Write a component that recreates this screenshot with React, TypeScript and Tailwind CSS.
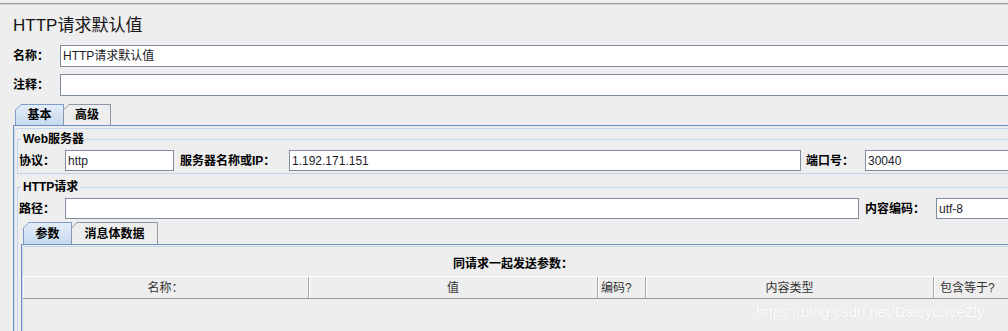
import React from "react";

function Label({ className = "", children }: { className?: string; children: React.ReactNode }) {
  return <div className={`shrink-0 font-bold leading-[16px] whitespace-nowrap ${className}`}>{children}</div>;
}

function Box({ className = "", children }: { className?: string; children?: React.ReactNode }) {
  return (
    <div
      className={`h-full shrink-0 bg-white border border-[#7f8d9c] pl-[2px] flex items-center text-[#1c1c2c] leading-[16px] whitespace-nowrap ${className}`}
    >
      {children}
    </div>
  );
}

function HCell({ className = "", children }: { className?: string; children: React.ReactNode }) {
  return (
    <div
      className={`h-full shrink-0 flex items-center border-r border-[#a8a8a8] shadow-[inset_1px_0_0_#ffffff] text-[#333333] leading-[16px] whitespace-nowrap ${className}`}
    >
      {children}
    </div>
  );
}

function Tab({ selected, className = "", children }: { selected?: boolean; className?: string; children: React.ReactNode }) {
  return (
    <div
      className={`h-full pt-px px-px [clip-path:polygon(0_6px,6px_0,100%_0,100%_100%,0_100%)] ${
        selected ? "bg-[#7e9cc6]" : "bg-[#8d97a6]"
      } ${className}`}
    >
      <div
        className={`h-full flex items-center justify-center font-bold leading-[16px] whitespace-nowrap [clip-path:polygon(0_5px,5px_0,100%_0,100%_100%,0_100%)] ${
          selected ? "bg-gradient-to-b from-[#e4edf8] to-[#c6d9ef]" : "bg-[#eeeeee]"
        }`}
      >
        {children}
      </div>
    </div>
  );
}

export default function App() {
  return (
    <div className="relative w-[1008px] h-[331px] overflow-hidden bg-[#eeeeee] text-[12px] text-black font-['Liberation_Sans','Noto_Sans_CJK_SC',sans-serif]">
      <div className="w-[1040px]">
        <div className="h-[3px]" />
        <div className="h-px bg-[#9aa0a8]" />
        <div className="h-px bg-[#d4d4d4]" />
        {/* title */}
        <div className="h-[40px] pl-[13px] pt-[11px] text-[17px] leading-[20px] text-[#161616]">HTTP请求默认值</div>
        {/* name */}
        <div className="flex h-[22px] items-center">
          <Label className="w-[60px] pl-[13px]">名称：</Label>
          <Box className="flex-1">HTTP请求默认值</Box>
        </div>
        {/* comment */}
        <div className="mt-[7px] flex h-[22px] items-center">
          <Label className="w-[60px] pl-[13px]">注释：</Label>
          <Box className="flex-1" />
        </div>
        {/* tabs */}
        <div className="mt-[8px] ml-[15px] flex h-[21px] items-end">
          <Tab selected className="w-[49px]">基本</Tab>
          <Tab className="-ml-px w-[48px]">高级</Tab>
        </div>
        {/* outer panel */}
        <div className="ml-[13px] border-t border-l border-[#6f8fc4] h-[300px]">
          <div className="mt-[2px] border-t border-l border-[#c5d6ee] h-[300px]">
            {/* Web server group */}
            <fieldset className="ml-[2px] mt-[3px] border border-[#c2d4ec] pl-[1px] pb-[2px]">
              <legend className="ml-[2px] px-[2px] font-bold leading-[14px]">Web服务器</legend>
              <div className="mt-[4px] flex h-[21px] items-center">
                <Label className="w-[46px]">协议：</Label>
                <Box className="w-[109px]">http</Box>
                <Label className="ml-[6px] w-[109px]">服务器名称或IP：</Label>
                <Box className="w-[512px]">1.192.171.151</Box>
                <Label className="ml-[5px] w-[59px]">端口号：</Label>
                <Box className="flex-1">30040</Box>
              </div>
            </fieldset>
            {/* HTTP request group */}
            <fieldset className="ml-[2px] mt-[6px] border-t border-l border-[#c2d4ec] pl-[1px]">
              <legend className="ml-[2px] px-[2px] font-bold leading-[14px]">HTTP请求</legend>
              <div className="mt-[4px] flex h-[21px] items-center">
                <Label className="w-[46px]">路径：</Label>
                <Box className="w-[794px]" />
                <Label className="ml-[6px] w-[71px]">内容编码：</Label>
                <Box className="flex-1">utf-8</Box>
              </div>
              {/* sub tabs */}
              <div className="mt-[3px] ml-[4px] flex h-[22px] items-end">
                <Tab selected className="w-[49px]">参数</Tab>
                <Tab className="-ml-px w-[87px]">消息体数据</Tab>
              </div>
              <div className="ml-[2px] border-t border-l border-[#6f8fc4] h-[120px]">
                <div className="mt-[1px] border-t border-l border-[#c5d6ee] h-[120px]">
                  <div className="mt-[9px] h-[16px] w-[980px] text-center font-bold leading-[16px]">同请求一起发送参数：</div>
                  <div className="mt-[4px] flex h-[23px] border-t border-white border-b border-b-[#9a9a9a]">
                    <HCell className="w-[286px] justify-center">名称：</HCell>
                    <HCell className="w-[289px] justify-center">值</HCell>
                    <HCell className="w-[48px] pl-[3px]">编码?</HCell>
                    <HCell className="w-[288px] justify-center">内容类型</HCell>
                    <HCell className="w-[100px] pl-[6px]">包含等于?</HCell>
                  </div>
                </div>
              </div>
            </fieldset>
          </div>
        </div>
      </div>
      <div className="absolute left-[756px] top-[303px] text-[15px] leading-[18px] text-white [text-shadow:0_0_1px_#d2d2d2] font-['Liberation_Sans',sans-serif]">
        https://blog.csdn.net/DaisyLoveZly
      </div>
    </div>
  );
}
